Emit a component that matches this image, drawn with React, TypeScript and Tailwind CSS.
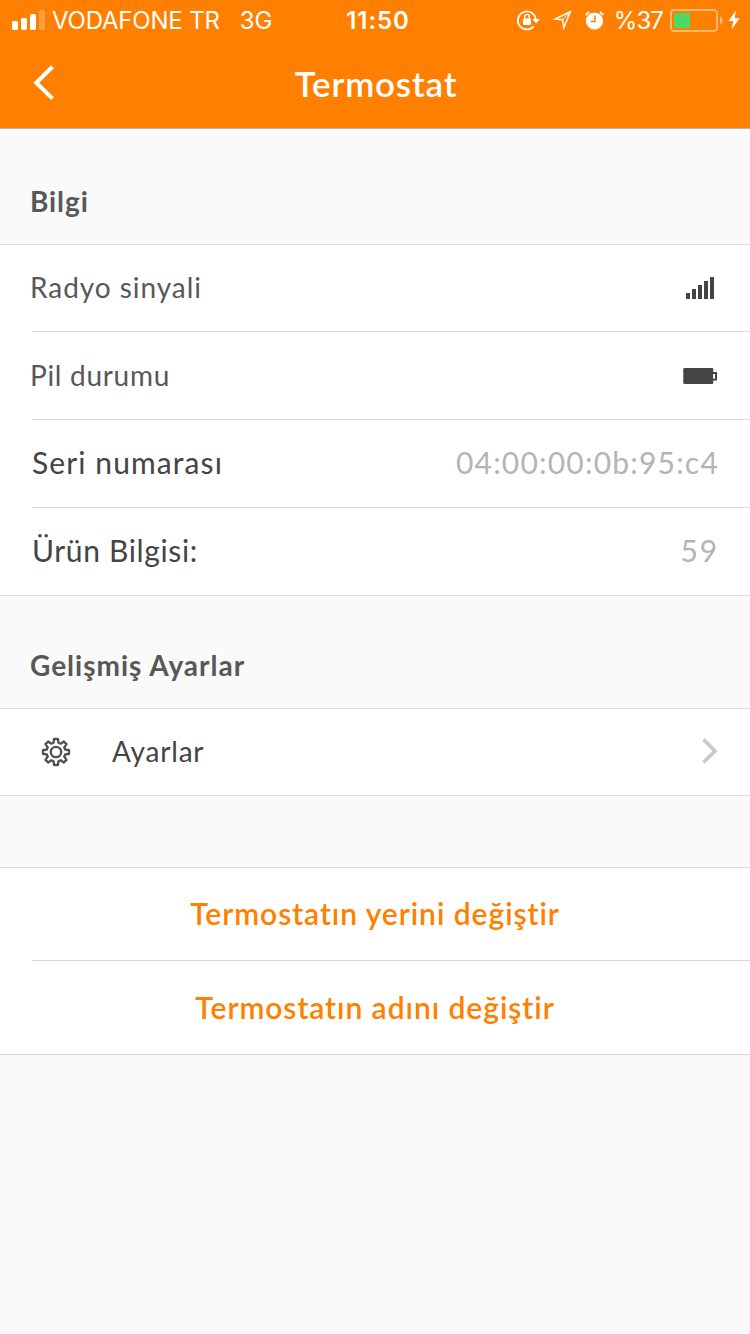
import type { ReactNode } from 'react';
import clsx from 'clsx';

function StatusBar() {
  return (
    <div className="grid h-10 grid-cols-[1fr_auto_1fr] items-center font-[Inter,sans-serif] text-[24px] leading-[38px] text-white">
      <div className="flex items-center pl-3">
        <svg width="33" height="20" viewBox="0 0 33 20" fill="currentColor">
          <rect x="0" y="11" width="6" height="9" rx="1.8" />
          <rect x="9" y="8" width="6" height="12" rx="1.8" />
          <rect x="18" y="4" width="6" height="16" rx="1.8" />
          <rect x="27" y="0" width="6" height="20" rx="1.8" opacity="0.25" />
        </svg>
        <span className="ml-[7px] pt-0.5 tracking-[-0.2px] whitespace-nowrap">VODAFONE TR</span>
        <span className="ml-5 pt-0.5 tracking-[-0.1px]">3G</span>
      </div>
      <span className="pt-0.5 pl-[6px] font-semibold tracking-[0.9px]">11:50</span>
      <div className="flex items-center justify-end pr-[10px]">
        {/* Rotation lock */}
        <svg width="23" height="21" viewBox="0 0 23 21" fill="none">
          <path d="M16.6 16.4A9 9 0 1 1 18.8 9.5" stroke="currentColor" strokeWidth="1.8" />
          <path d="M15.4 9h7.4l-3.7 4.6z" fill="currentColor" />
          <rect x="6" y="8.5" width="8" height="6.4" rx="0.8" fill="currentColor" />
          <path d="M7.700 9V6.700a2.300 2.300 0 0 1 4.600 0V9" stroke="currentColor" strokeWidth="1.4" />
        </svg>
        {/* Location arrow */}
        <svg className="ml-3" width="20" height="20" viewBox="0 0 20 20" fill="none">
          <path d="M18.300 1.800 3.300 9l7.400.7 1.100 8z" stroke="currentColor" strokeWidth="1.500" />
          <path d="M18.300 1.800 10.700 9.700" stroke="currentColor" strokeWidth="1" />
        </svg>
        {/* Alarm clock */}
        <svg className="ml-[13px]" width="19" height="19" viewBox="0 0 19 19" fill="none">
          <circle cx="9.5" cy="10" r="8.6" fill="currentColor" />
          <path d="M.8 4 4 1M18.200 4 15 1" stroke="currentColor" strokeWidth="2" />
          <path d="M10 4.600v5.900H5.800" stroke="#ff8000" strokeWidth="1.5" />
        </svg>
        <span className="ml-[10px] pt-0.5 tracking-[-0.9px]">%37</span>
        <svg className="ml-[7px]" width="53" height="23" viewBox="0 0 53 23" fill="none">
          <rect x="1" y="1" width="46" height="21" rx="3.5" stroke="#fff" strokeOpacity="0.45" strokeWidth="2" />
          <path d="M50 7.500c1.600.6 2.700 2.200 2.700 4s-1.100 3.400-2.700 4z" fill="#fff" fillOpacity="0.45" />
          <path d="M5.500 4H20v15H5.500A1.500 1.500 0 0 1 4 17.500v-12A1.500 1.500 0 0 1 5.500 4z" fill="#4cd964" />
        </svg>
        <svg className="ml-[5px]" width="12" height="20" viewBox="0 0 12 20" fill="currentColor">
          <path d="M7.700.600.600 11h4.700l-1.700 8.400L11.600 8.300H6.700z" />
        </svg>
      </div>
    </div>
  );
}

function Header() {
  return (
    <header className="h-[129px] border-b border-[#b2b2b2] bg-[#ff8000] text-white">
      <StatusBar />
      <div className="grid h-[86px] grid-cols-[1fr_auto_1fr] items-center">
        <svg className="ml-8" width="24" height="38" viewBox="0 0 24 38" fill="none">
          <path d="M20.500 2.800 4.300 18.700 20.500 34.700" stroke="currentColor" strokeWidth="4" />
        </svg>
        <h1 className="pl-0.5 text-[35px] leading-[86px] font-semibold tracking-[0.8px]">Termostat</h1>
      </div>
    </header>
  );
}

function SignalIcon() {
  return (
    <svg className="mr-9" width="28" height="22" viewBox="0 0 28 22" fill="#444">
      <rect x="0" y="16" width="4" height="6" />
      <rect x="6" y="12" width="4" height="10" />
      <rect x="12" y="8" width="4" height="14" />
      <rect x="18" y="4" width="4" height="18" />
      <rect x="24" y="0" width="4" height="22" />
    </svg>
  );
}

function BatteryIcon() {
  return (
    <svg className="mr-[33px]" width="34" height="16" viewBox="0 0 34 16" fill="none">
      <rect x="0.3" y="0" width="30" height="16" rx="1.2" fill="#444" />
      <rect x="29" y="5" width="4" height="6.5" stroke="#444" strokeWidth="2" />
      <path d="M30.300 6h1.700v4.500h-1.700z" fill="#fff" />
    </svg>
  );
}

function GearIcon() {
  return (
    <svg
      className="mb-px"
      width="30"
      height="30"
      viewBox="-15 -15 30 30"
      fill="none"
      stroke="#505050"
      strokeWidth="2.3"
      strokeLinejoin="round"
    >
      <path d="M-2.500-9.200-1.900-13H1.900L2.500-9.200 4.700-8.300 7.900-10.500 10.500-7.900 8.300-4.700 9.200-2.500 13-1.900V1.900L9.200 2.500 8.300 4.700 10.500 7.900 7.900 10.500 4.700 8.300 2.500 9.200 1.900 13H-1.900L-2.500 9.200-4.700 8.300-7.900 10.500-10.500 7.900-8.300 4.700-9.200 2.500-13 1.900V-1.900L-9.200-2.500-8.300-4.700-10.500-7.900-7.900-10.500-4.700-8.300z" />
      <circle r="5.2" />
    </svg>
  );
}

function SectionTitle({ className, children }: { className: string; children: ReactNode }) {
  return (
    <h2 className={clsx('pl-[30px] text-[28px] leading-9 font-bold text-[#585858]', className)}>
      {children}
    </h2>
  );
}

interface InfoRowProps {
  label: string;
  className: string;
  children: ReactNode;
}

function InfoRow({ label, className, children }: InfoRowProps) {
  return (
    <li className="group pl-8">
      <div className="flex h-[88px] items-center justify-between border-b border-[#dadada] group-first:h-[87px] group-last:h-[87px] group-last:border-b-0">
        <span className={clsx('pb-0.5', className)}>{label}</span>
        {children}
      </div>
    </li>
  );
}

export default function App() {
  return (
    <div className="min-h-[1334px] w-[750px] bg-[#fafafa] font-[Lato,sans-serif]">
      <Header />

      <main>
        <SectionTitle className="h-[115px] pt-[54px] tracking-[0.9px]">Bilgi</SectionTitle>
        <ul className="border-y border-[#dadada] bg-white">
          <InfoRow label="Radyo sinyali" className="-ml-0.5 text-[28px] tracking-[0.95px] text-[#585858]">
            <SignalIcon />
          </InfoRow>
          <InfoRow label="Pil durumu" className="-ml-0.5 text-[28px] tracking-[0.7px] text-[#585858]">
            <BatteryIcon />
          </InfoRow>
          <InfoRow label="Seri numarası" className="text-[30px] tracking-[1.1px] text-[#444]">
            <span className="mr-[31px] pb-0.5 text-[30px] tracking-[1.2px] text-[#b4b4b4]">04:00:00:0b:95:c4</span>
          </InfoRow>
          <InfoRow label="Ürün Bilgisi:" className="text-[30px] tracking-[0.65px] text-[#444]">
            <span className="mr-[31px] pb-0.5 text-[30px] tracking-[1.8px] text-[#b4b4b4]">59</span>
          </InfoRow>
        </ul>

        <SectionTitle className="h-[112px] pt-[51px] tracking-[1px]">Gelişmiş Ayarlar</SectionTitle>
        <div className="flex h-[88px] items-center border-y border-[#dadada] bg-white pl-[41px]">
          <GearIcon />
          <span className="ml-[41px] flex-1 pb-0.5 text-[28px] tracking-[0.8px] text-[#444]">Ayarlar</span>
          <svg className="mr-8 mb-0.5" width="16" height="26" viewBox="0 0 16 26" fill="none">
            <path d="M1.500 1.500 13 13 1.500 24.500" stroke="#c7c7cc" strokeWidth="3.6" />
          </svg>
        </div>

        <div className="mt-[71px] border-y border-[#dadada] bg-white text-center text-[30px] font-semibold text-[#ff8000]">
          <button className="block h-[92px] w-full pb-0.5 tracking-[0.95px]">Termostatın yerini değiştir</button>
          <div className="ml-8 h-px bg-[#dadada]" />
          <button className="block h-[93px] w-full pb-px tracking-[0.95px]">Termostatın adını değiştir</button>
        </div>
      </main>
    </div>
  );
}
